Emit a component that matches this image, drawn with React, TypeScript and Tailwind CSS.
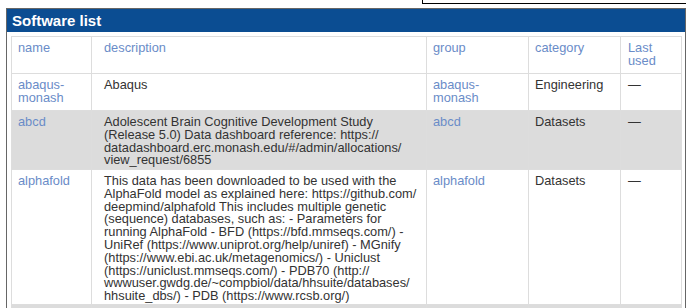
import React from "react";

type Row = {
  name: string;
  description: string;
  group: string;
  category: string;
  lastUsed: string;
};

const rows: Row[] = [
  {
    name: "abaqus-monash",
    description: "Abaqus",
    group: "abaqus-monash",
    category: "Engineering",
    lastUsed: "—",
  },
  {
    name: "abcd",
    description:
      "Adolescent Brain Cognitive Development Study (Release 5.0) Data dashboard reference: https://datadashboard.erc.monash.edu/#/admin/allocations/view_request/6855",
    group: "abcd",
    category: "Datasets",
    lastUsed: "—",
  },
  {
    name: "alphafold",
    description:
      "This data has been downloaded to be used with the AlphaFold model as explained here: https://github.com/deepmind/alphafold This includes multiple genetic (sequence) databases, such as: - Parameters for running AlphaFold - BFD (https://bfd.mmseqs.com/) - UniRef (https://www.uniprot.org/help/uniref) - MGnify (https://www.ebi.ac.uk/metagenomics/) - Uniclust (https://uniclust.mmseqs.com/) - PDB70 (http://wwwuser.gwdg.de/~compbiol/data/hhsuite/databases/hhsuite_dbs/) - PDB (https://www.rcsb.org/)",
    group: "alphafold",
    category: "Datasets",
    lastUsed: "—",
  },
  {
    name: "amber",
    description: "Amber molecular dynamics package",
    group: "amber",
    category: "Chemistry",
    lastUsed: "—",
  },
];

// Allow long URLs to wrap after each run of slashes.
function breakable(text: string) {
  const parts = text.split(/(\/+)/);
  return parts.map((p, i) =>
    /^\/+$/.test(p) ? (
      <React.Fragment key={i}>
        {p}
        <wbr />
      </React.Fragment>
    ) : (
      <React.Fragment key={i}>{p}</React.Fragment>
    )
  );
}

const cell = "border border-[#dddddd] align-top pt-[5px] pb-[1px] pl-[6px] pr-[5px]";

export default function App() {
  return (
    <div
      className="w-[686px] h-[308px] overflow-hidden bg-white text-[12.8px] leading-[12.8px] text-[#333333]"
      style={{ fontFamily: '"Liberation Sans", Arial, sans-serif' }}
    >
      <div className="flex justify-end">
        <div className="w-[264px] h-[4px] border-l border-b border-black" />
      </div>
      <div className="ml-[6px] mt-[4px] w-[680px] border border-[#666666]">
        <div className="h-[23px] bg-[#0b4d92] pl-[5px] pt-[3px] text-[15px] leading-[17px] font-bold text-white">
          Software list
        </div>
        <div className="p-[4px]">
          <table className="w-[670px] table-fixed border-collapse">
            <colgroup>
              <col className="w-[80px]" />
              <col className="w-[335px]" />
              <col className="w-[102px]" />
              <col className="w-[92px]" />
              <col className="w-[61px]" />
            </colgroup>
            <thead>
              <tr className="h-[37px] text-[#6a8cc8]">
                <th className={`${cell} font-normal text-left`}>name</th>
                <th className={`${cell} pl-[12px] pr-[3px] font-normal text-left`}>description</th>
                <th className={`${cell} font-normal text-left`}>group</th>
                <th className={`${cell} font-normal text-left`}>category</th>
                <th className={`${cell} pl-[7px] font-normal text-left`}>
                  Last
                  <br />
                  used
                </th>
              </tr>
            </thead>
            <tbody>
              {rows.map((r, i) => (
                <tr
                  key={r.name}
                  className={`${i % 2 === 1 ? "bg-[#dcdcdc]" : "bg-white"} ${i === 0 ? "h-[37px]" : ""} ${i === 1 ? "h-[59px]" : ""}`}
                >
                  <td className={`${cell} text-[#6a8cc8]`}>{r.name}</td>
                  <td className={`${cell} pl-[12px] pr-[3px]`}>{breakable(r.description)}</td>
                  <td className={`${cell} text-[#6a8cc8]`}>{r.group}</td>
                  <td className={cell}>{r.category}</td>
                  <td className={`${cell} pl-[7px]`}>{r.lastUsed}</td>
                </tr>
              ))}
            </tbody>
          </table>
        </div>
      </div>
    </div>
  );
}
